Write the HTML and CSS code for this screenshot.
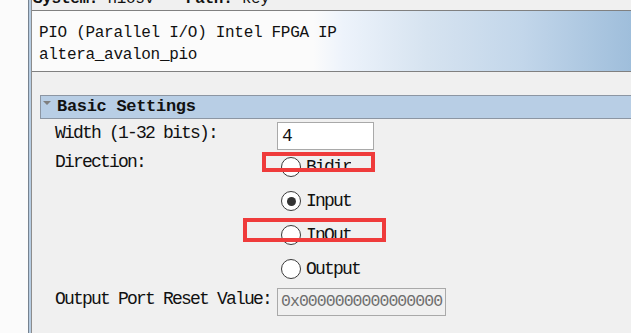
FILE: index.html
```html
<!DOCTYPE html>
<html lang="en">

<head>
    <title>PIO Parameter Editor</title>
    <link rel="stylesheet" href="styles.css">
</head>

<body>
    <div class="gutter"></div>
    <div class="gutter-edge"></div>
    <div class="main">
        <div class="top-bar">
            <div class="top-text"><b>System:</b> niosv<span class="spacer"></span><b>Path:</b> key</div>
        </div>
        <div class="header">
            <div>PIO (Parallel I/O) Intel FPGA IP</div>
            <div>altera_avalon_pio</div>
        </div>
        <div class="group-title">
            <span class="arrow"></span>
            <span>Basic Settings</span>
        </div>
        <div class="form">
            <div class="row row-width">
                <div class="label">Width (1-32 bits):</div>
                <div class="text-box">4</div>
            </div>
            <div class="row row-direction">
                <div class="label">Direction:</div>
                <div class="radios">
                    <div class="radio-row">
                        <span class="radio"></span>
                        <span class="radio-label clipped">Bidir</span>
                    </div>
                    <div class="radio-row">
                        <span class="radio checked"></span>
                        <span class="radio-label">Input</span>
                    </div>
                    <div class="radio-row">
                        <span class="radio"></span>
                        <span class="radio-label">InOut</span>
                    </div>
                    <div class="radio-row">
                        <span class="radio"></span>
                        <span class="radio-label">Output</span>
                    </div>
                </div>
            </div>
            <div class="row row-reset">
                <div class="label">Output Port Reset Value:</div>
                <div class="text-box disabled">0x0000000000000000</div>
            </div>
        </div>
    </div>

    <!-- red annotation boxes -->
    <div class="mark mark-bidir"></div>
    <div class="mark mark-inout"></div>
</body>

</html>
```

FILE: styles.css
```css
body {
    margin: 0;
    display: flex;
    height: 333px;
    overflow: hidden;
    background-color: #f0f0f0;
    color: #111;
    font-family: "Liberation Mono", "DejaVu Sans Mono", monospace;
    position: relative;
}

.gutter {
    width: 28px;
    background-color: #fbfbfb;
    border-right: 1px solid #76828f;
}

.gutter-edge {
    width: 2px;
    background-color: #b6cce2;
}

.main {
    flex: 1;
    border-left: 1px solid #8c8c8c;
    display: flex;
    flex-direction: column;
}

.top-bar {
    height: 10px;
    overflow: hidden;
}

.top-text {
    margin-top: -9px;
    padding-left: 1px;
    font-size: 16px;
    letter-spacing: -0.3px;
    line-height: 16px;
    white-space: pre;
}

.top-text .spacer {
    display: inline-block;
    width: 32px;
}

.header {
    border-top: 1px solid #808080;
    border-bottom: 1px solid #808080;
    height: 60px;
    padding-left: 7px;
    font-size: 16px;
    letter-spacing: -0.3px;
    line-height: 22px;
    background: linear-gradient(to right, #fbfbfb 0%, #fbfbfb 47%, #edf3fb 52%, #d6e3f0 66%, #c2d6ea 82%, #9fbedb 100%);
}

.header div:first-child {
    margin-top: 11px;
}

.group-title {
    margin: 23px 0 0 8px;
    height: 22px;
    border-top: 1px solid #8c96a3;
    border-left: 1px solid #8c96a3;
    border-bottom: 1px solid #8c96a3;
    background-color: #b8cee5;
    display: flex;
    align-items: center;
    overflow: hidden;
    font-size: 17px;
    font-weight: bold;
    letter-spacing: -0.3px;
    line-height: 22px;
}

.arrow {
    width: 0;
    height: 0;
    margin: 0 6px 8px 2px;
    border-left: 4px solid transparent;
    border-right: 4px solid transparent;
    border-top: 4px solid #7f7f7f;
}

.form {
    padding-left: 23px;
    font-size: 18px;
    letter-spacing: -1.8px;
    line-height: 20px;
}

.row {
    display: flex;
}

.label {
    width: 222px;
}

.row-width {
    margin-top: 3px;
}

.row-width .label,
.row-reset .label {
    padding-top: 1px;
}

.row-direction .label {
    padding-top: 2px;
}

.row-reset {
    margin-top: 2px;
}

.text-box {
    width: 91px;
    height: 26px;
    border: 1px solid #a9a9a9;
    background-color: #fff;
    padding-left: 4px;
    line-height: 26px;
    overflow: hidden;
    white-space: nowrap;
}

.text-box.disabled {
    width: 164px;
    padding-left: 3px;
    background-color: #f0f0f0;
    color: #6e6e6e;
    font-size: 16.5px;
    letter-spacing: -0.95px;
}

.radio-row {
    height: 34px;
    display: flex;
    align-items: center;
}

.radio {
    width: 18px;
    height: 18px;
    margin-left: 4px;
    border: 1px solid #3a3a3a;
    border-radius: 50%;
    background-color: #fff;
    display: flex;
    align-items: center;
    justify-content: center;
}

.radio.checked::after {
    content: "";
    width: 9px;
    height: 9px;
    border-radius: 50%;
    background-color: #333;
}

.radio-label {
    margin-left: 5px;
}

.radio-label.clipped {
    height: 14px;
    overflow: hidden;
    align-self: flex-start;
    margin-top: 7px;
}

.mark {
    position: absolute;
    border: 4px solid #ef3b3b;
    box-sizing: border-box;
}

.mark-bidir {
    left: 262px;
    top: 152px;
    width: 113px;
    height: 20px;
}

.mark-inout {
    left: 243px;
    top: 218px;
    width: 143px;
    height: 24px;
}
```
